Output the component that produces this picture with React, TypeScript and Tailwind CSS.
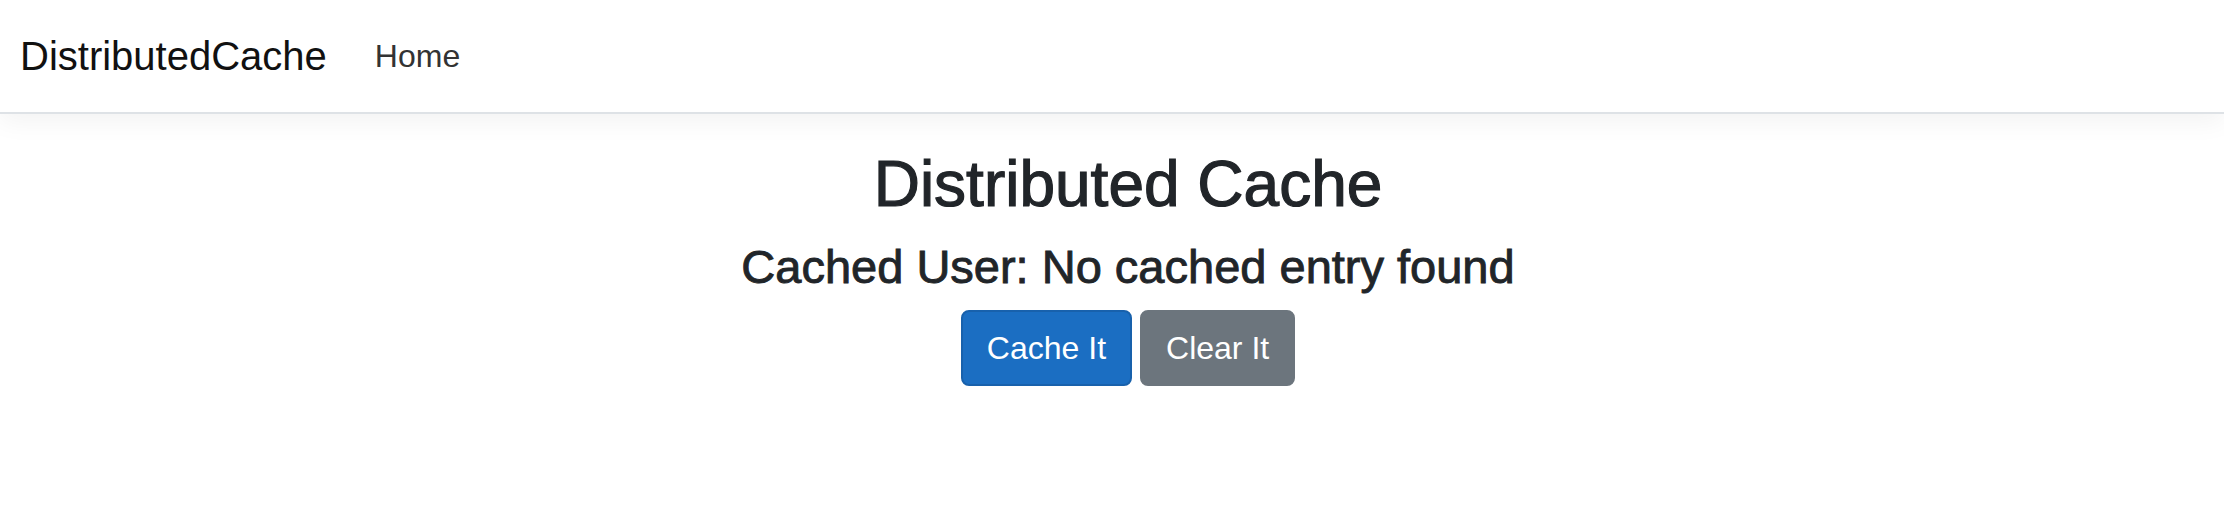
export default function App() {
  return (
    <div className="min-h-screen bg-white font-['Liberation_Sans',Arial,sans-serif] text-[#212529]">
      <header className="border-b-2 border-[#dee2e6] bg-white shadow-[0_8px_24px_rgba(0,0,0,0.05)]">
        <nav className="flex h-[112px] items-center px-[20px]">
          <a href="#" className="mr-[32px] py-[10px] text-[40px] leading-[60px] text-[#111]">
            DistributedCache
          </a>
          <a href="#" className="py-[16px] pl-[16px] text-[32px] leading-[48px] text-[#333]">
            Home
          </a>
        </nav>
      </header>

      <main className="pl-[32px] pt-[32px] text-center">
        <h1 className="mb-[16px] text-[64px] font-medium leading-[77px] [-webkit-text-stroke:1.2px_#212529]">
          Distributed Cache
        </h1>
        <h3 className="mb-[15px] text-[47px] font-medium leading-[56px] [-webkit-text-stroke:0.9px_#212529]">
          Cached User: No cached entry found
        </h3>
        <div className="flex justify-center gap-[8px]">
          <button className="rounded-[8px] border-2 border-[#1861ac] bg-[#1b6ec2] px-[24px] py-[12px] text-[32px] leading-[48px] text-white">
            Cache It
          </button>
          <button className="rounded-[8px] border-2 border-[#6c757d] bg-[#6c757d] px-[24px] py-[12px] text-[32px] leading-[48px] text-white">
            Clear It
          </button>
        </div>
      </main>
    </div>
  )
}
